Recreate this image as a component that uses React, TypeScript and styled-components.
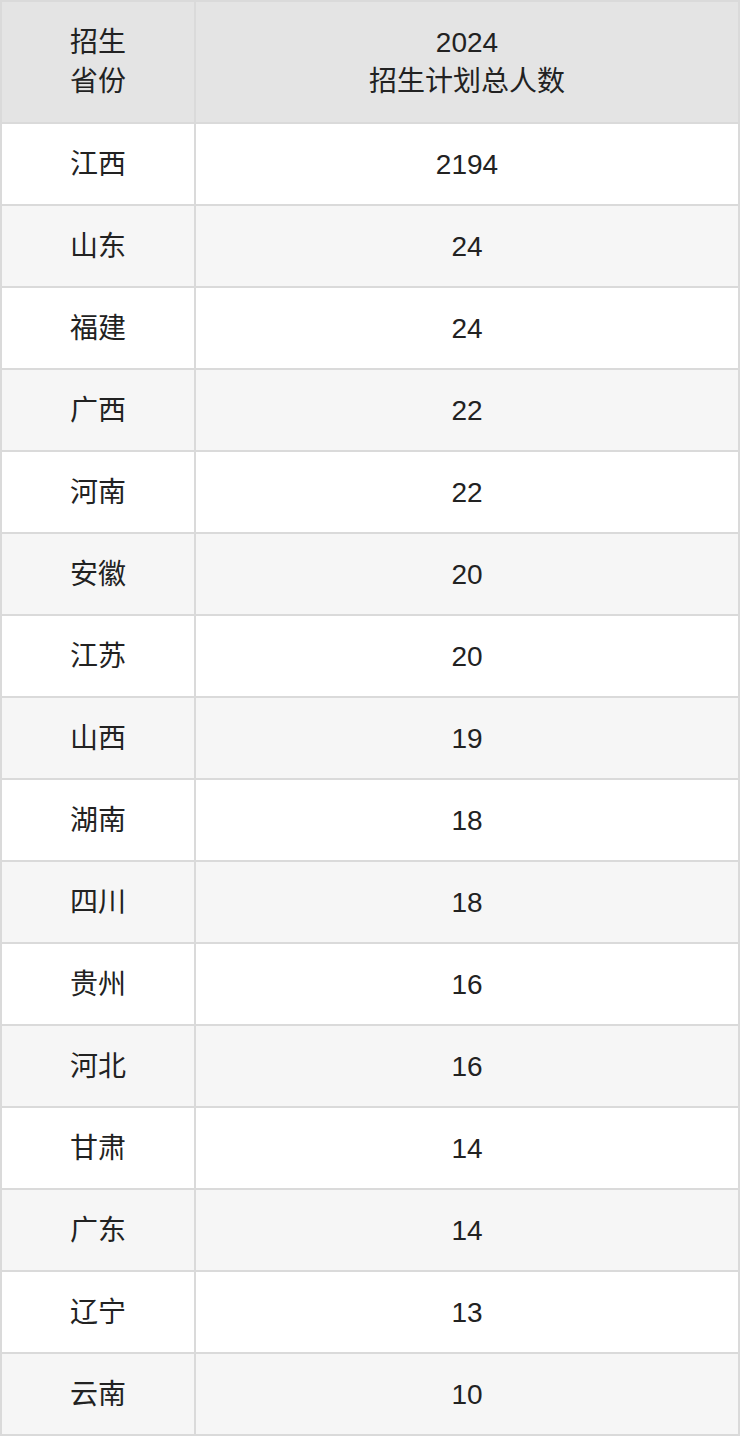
import React from "react";
import styled, { createGlobalStyle } from "styled-components";

const GlobalStyle = createGlobalStyle`
  html, body {
    margin: 0;
    padding: 0;
    background: #ffffff;
  }
  body {
    font-family: "Liberation Sans", "Noto Sans CJK SC", sans-serif;
    color: #222222;
  }
`;

const Table = styled.div`
  width: 740px;
  box-sizing: border-box;
  display: grid;
  grid-template-columns: 192px 1fr;
  grid-template-rows: 120px;
  grid-auto-rows: 80px;
  gap: 2px;
  padding: 2px;
  background: #dadada;
`;

const HeadCell = styled.div`
  display: flex;
  align-items: center;
  justify-content: center;
  text-align: center;
  background: #e4e4e4;
  font-size: 28px;
  line-height: 39px;
  color: #222222;
`;

const Cell = styled.div<{ $alt: boolean }>`
  display: flex;
  align-items: center;
  justify-content: center;
  background: ${(p) => (p.$alt ? "#f6f6f6" : "#ffffff")};
  font-size: 28px;
  line-height: 39px;
  color: #222222;
`;

const rows: [string, number][] = [
  ["江西", 2194],
  ["山东", 24],
  ["福建", 24],
  ["广西", 22],
  ["河南", 22],
  ["安徽", 20],
  ["江苏", 20],
  ["山西", 19],
  ["湖南", 18],
  ["四川", 18],
  ["贵州", 16],
  ["河北", 16],
  ["甘肃", 14],
  ["广东", 14],
  ["辽宁", 13],
  ["云南", 10],
];

export default function App() {
  return (
    <>
      <GlobalStyle />
      <Table>
        <HeadCell>
          招生
          <br />
          省份
        </HeadCell>
        <HeadCell>
          2024
          <br />
          招生计划总人数
        </HeadCell>
        {rows.map(([name, n], i) => (
          <React.Fragment key={name + i}>
            <Cell $alt={i % 2 === 1}>{name}</Cell>
            <Cell $alt={i % 2 === 1}>{n}</Cell>
          </React.Fragment>
        ))}
      </Table>
    </>
  );
}
